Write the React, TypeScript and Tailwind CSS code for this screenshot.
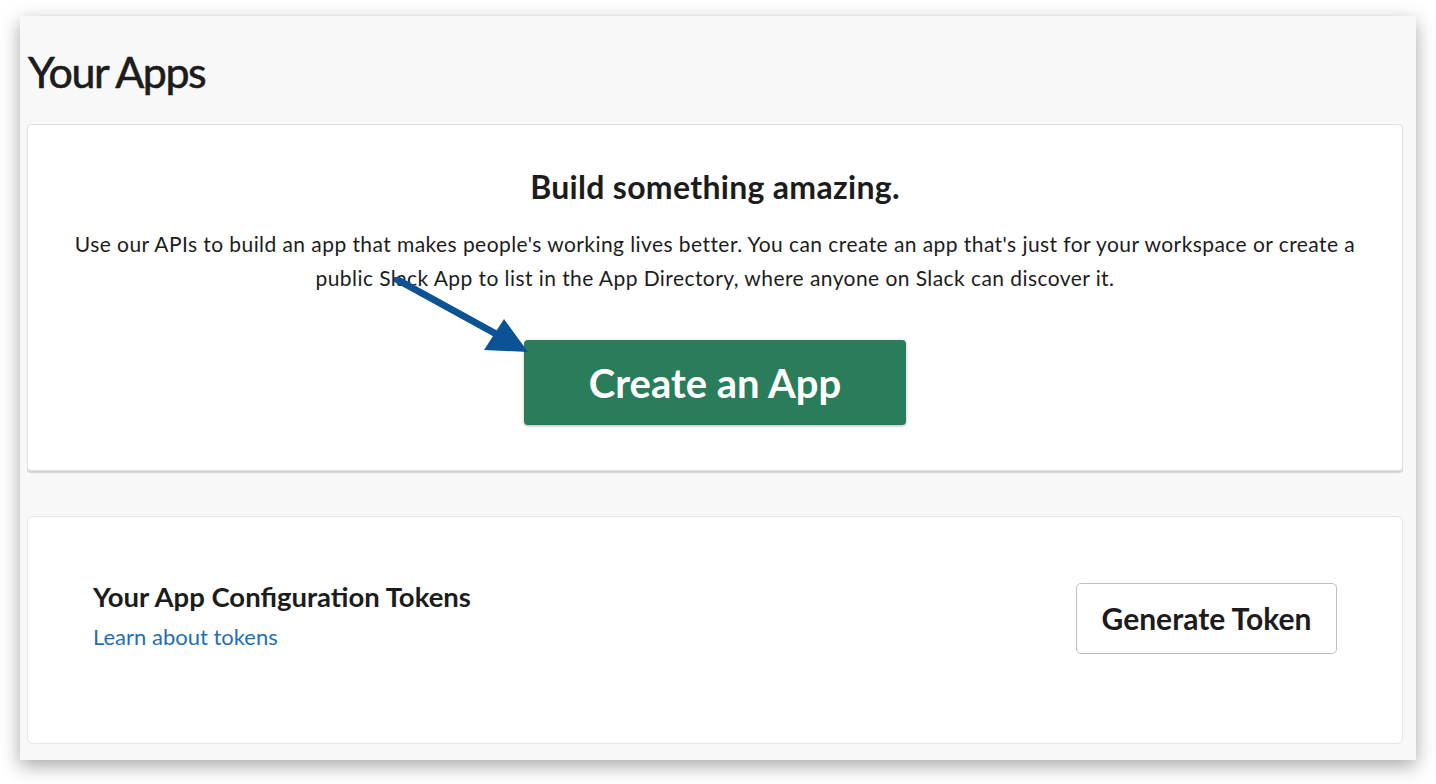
import React from "react";

function Arrow() {
  return (
    <svg
      className="absolute left-[366px] top-[152px]"
      width="140"
      height="80"
      viewBox="0 0 140 80"
    >
      <line x1="2" y1="2" x2="104" y2="58" stroke="#0b5394" strokeWidth="7" strokeLinecap="round" />
      <polygon points="134,75 90,73 110,42" fill="#0b5394" />
    </svg>
  );
}

export default function App() {
  return (
    <div className="w-[1436px] h-[784px] bg-white pt-[16px] pl-[20px] font-['Lato','Noto_Sans',sans-serif] text-[#1d1c1d]">
      <div className="w-[1396px] h-[744px] bg-[#f8f8f8] shadow-[0_6px_18px_rgba(0,0,0,0.35)] pl-[7px] pr-[13px]">
        <h1 className="pt-[30px] text-[43px] leading-[52px] font-normal tracking-[-1.5px] text-[#1d1c1d] pl-[1px] [-webkit-text-stroke:0.6px_#1d1c1d]">
          Your Apps
        </h1>

        {/* Build card */}
        <div className="relative mt-[26px] h-[347px] bg-white rounded-[4px] border border-[#e2e2e2] shadow-[0_2px_1px_rgba(0,0,0,0.15)] flex flex-col items-center">
          <h2 className="mt-[43px] text-[32px] leading-[38px] font-bold tracking-[0.3px]">Build something amazing.</h2>
          <p className="mt-[21px] text-[21px] leading-[34px] text-center px-[30px] tracking-[0.43px] text-[#1d1c1d]">
            Use our APIs to build an app that makes people's working lives better. You can create an app
            that's just for your workspace or create a public Slack App to list in the App Directory, where
            anyone on Slack can discover it.
          </p>
          <button className="mt-[45px] w-[382px] h-[85px] rounded-[4px] bg-[#2a7d5b] text-white text-[40px] font-bold shadow-[0_1px_3px_rgba(0,0,0,0.3)]">
            Create an App
          </button>
          <Arrow />
        </div>

        {/* Tokens card */}
        <div className="mt-[45px] h-[228px] bg-white rounded-[6px] border border-[#e4e4e4] flex items-center justify-between pl-[65px] pr-[65px]">
          <div className="flex flex-col -mt-[26px]">
            <div className="text-[27.5px] leading-[34px] font-bold -mt-[2px]">Your App Configuration Tokens</div>
            <a className="mt-[8px] text-[22px] leading-[30px] text-[#1f6fb5]">Learn about tokens</a>
          </div>
          <button className="-mt-[24px] w-[261px] h-[71px] rounded-[5px] border border-[#bdbdbd] bg-white text-[30px] font-bold text-[#1d1c1d]">
            Generate Token
          </button>
        </div>
      </div>
    </div>
  );
}
